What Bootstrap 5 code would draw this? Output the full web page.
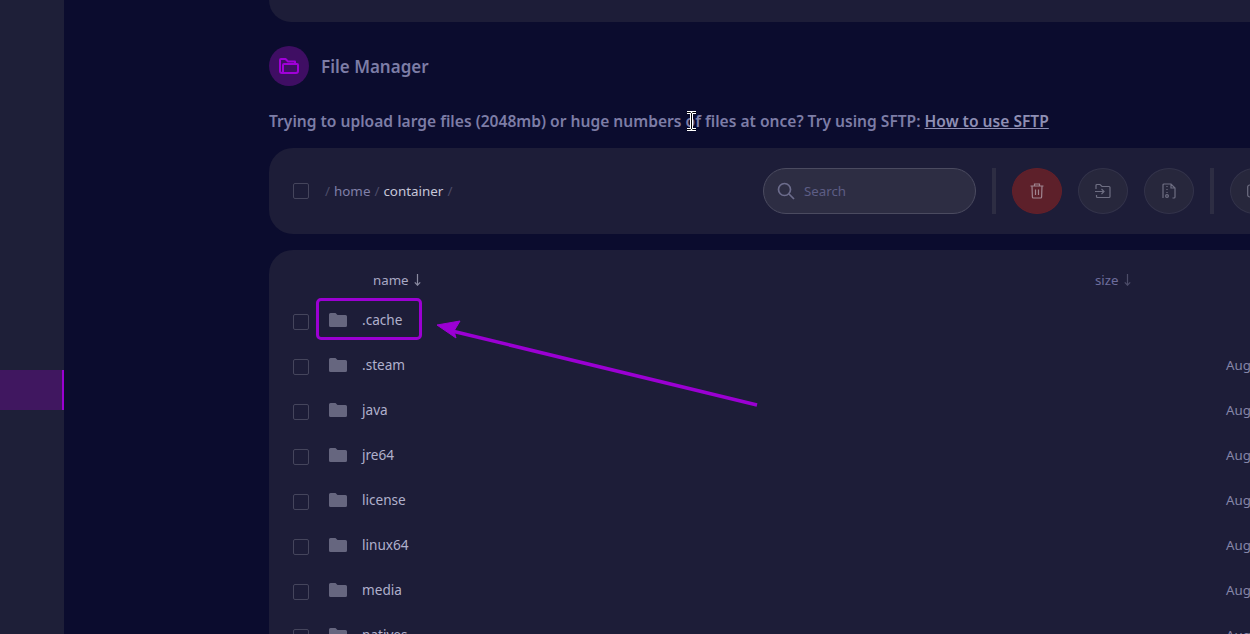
<!DOCTYPE html>
<html lang="en">
<head>
    <meta charset="UTF-8">
    <title>File Manager</title>
    <link href="https://cdn.jsdelivr.net/npm/bootstrap@5.3.0/dist/css/bootstrap.min.css" rel="stylesheet">
    <style>
        html, body {
            height: 100%;
            overflow: hidden;
        }

        body {
            background: #0b0c2e;
            font-family: "Noto Sans", "Open Sans", sans-serif;
            font-size: 13.3px;
            color: #b9b9cf;
        }

        .app-shell {
            width: 1250px;
            height: 634px;
            overflow: hidden;
            position: relative;
        }

        .side-rail {
            width: 64px;
            flex: 0 0 64px;
            background: #1e1f38;
            padding-top: 370px;
        }

        .side-active {
            height: 40px;
            background: #401760;
            border-right: 2px solid #9b00d3;
        }

        .page-body {
            flex: 0 0 1400px;
            padding-left: 205px;
        }

        .top-card {
            height: 22px;
            background: #1d1d38;
            border-radius: 0 0 24px 24px;
        }

        .title-row {
            margin-top: 24px;
            height: 40px;
        }

        .title-badge {
            width: 40px;
            height: 40px;
            background: #3f0e63;
        }

        .title-text {
            font-size: 17px;
            font-weight: 600;
            color: #7d7da6;
            margin: 2px 0 0 12px;
        }

        .upload-note {
            margin: 24px 0 15px;
            height: 23px;
            line-height: 23px;
            font-size: 15.58px;
            font-weight: 600;
            color: #7d7da6;
            white-space: nowrap;
        }

        .upload-note a {
            color: #8f8fb4;
        }

        .tool-card {
            height: 86px;
            background: #1d1d38;
            border-radius: 24px;
            padding: 0 24px;
        }

        .tick-box {
            width: 16px;
            height: 16px;
            border: 1px solid #45455c;
            border-radius: 2px;
            flex: none;
        }

        .crumbs {
            margin-left: 16px;
            font-size: 13.4px;
            color: #8080a8;
            gap: 4px;
        }

        .crumb-sep {
            color: #4c4c68;
        }

        .crumb-now {
            color: #c7c7d8;
        }

        .tool-right {
            position: absolute;
            left: 763px;
            gap: 16px;
        }

        .search-pill {
            width: 213px;
            height: 46px;
            background: #2d2d43;
            border: 1px solid #4b4b60;
            border-radius: 23px;
            padding-left: 13px;
            gap: 9px;
            color: #5d5d85;
        }

        .search-label {
            margin-top: 2px;
        }

        .tool-divider {
            width: 4px;
            height: 46px;
            background: #2d2d43;
        }

        .round-tool {
            width: 50px;
            height: 46px;
            border-radius: 50%;
            background: #27273c;
            border: 1px solid #33334a;
            color: #6e6e82;
        }

        .round-danger {
            background: #5d202a;
            border-color: #64202a;
            color: #a08590;
        }

        .list-card {
            margin-top: 16px;
            height: 500px;
            background: #1d1d38;
            border-radius: 24px 24px 0 0;
            position: relative;
            padding-left: 24px;
        }

        .list-head {
            height: 48px;
            position: relative;
        }

        .head-name {
            position: absolute;
            left: 80px;
            top: 21px;
            color: #a9a9c4;
        }

        .head-size {
            position: absolute;
            left: 802px;
            top: 21px;
            color: #6d6d9c;
        }

        .head-arrow {
            margin-left: 5px;
            vertical-align: -1px;
        }

        .file-row {
            height: 45px;
        }

        .file-row .tick-box {
            margin-top: 2px;
        }

        .file-icon {
            margin-left: 20px;
            margin-top: -2px;
            flex: none;
        }

        .file-name {
            margin-left: 15px;
            color: #b0b0cc;
            font-size: 13.6px;
        }

        .file-date {
            position: absolute;
            left: 957px;
            color: #8585a8;
        }

        .mark-box {
            position: absolute;
            left: 316px;
            top: 298px;
            width: 106px;
            height: 42px;
            border: 3px solid #9b00d3;
            border-radius: 5px;
        }

        .arrow-layer {
            position: absolute;
            left: 0;
            top: 0;
        }

        .text-cursor {
            position: absolute;
            left: 686px;
            top: 111px;
        }
    </style>
</head>
<body>
    <div class="app-shell d-flex">
        <div class="side-rail">
            <div class="side-active"></div>
        </div>

        <div class="page-body">
            <div class="top-card"></div>

            <div class="title-row d-flex align-items-center">
                <div class="title-badge rounded-circle d-flex align-items-center justify-content-center">
                    <svg width="22" height="22" viewBox="0 0 22 22" fill="none" stroke="#a000d8" stroke-width="2" stroke-linejoin="round">
                        <path d="M2 16V5a1 1 0 0 1 1-1h4.500L10 6.500h7V9"/>
                        <path d="M5 18V10a1 1 0 0 1 1-1h13a1 1 0 0 1 1 1v6a2 2 0 0 1-2 2H4a2 2 0 0 1-2-2"/>
                    </svg>
                </div>
                <h1 class="title-text">File Manager</h1>
            </div>

            <p class="upload-note">Trying to upload large files (2048mb) or huge numbers of files at once? Try using SFTP: <a href="#">How to use SFTP</a></p>

            <div class="tool-card d-flex align-items-center">
                <span class="tick-box"></span>
                <div class="crumbs d-flex">
                    <span class="crumb-sep">/</span><span>home</span><span class="crumb-sep">/</span><span class="crumb-now">container</span><span class="crumb-sep">/</span>
                </div>
                <div class="tool-right d-flex align-items-center">
                    <div class="search-pill d-flex align-items-center">
                        <svg width="18" height="18" viewBox="0 0 18 18" fill="none" stroke="#6c6c8c" stroke-width="1.700"><circle cx="7.500" cy="7.500" r="6"/><path d="M12 12l5 5"/></svg>
                        <span class="search-label">Search</span>
                    </div>
                    <span class="tool-divider"></span>
                    <button class="round-tool round-danger d-flex align-items-center justify-content-center p-0" type="button" aria-label="Delete">
                        <svg width="16" height="16" viewBox="0 0 16 16" fill="none" stroke="currentColor" stroke-width="1.200"><path d="M1.500 3h13M5.500 3V1h5v2M3 3l.4 11a1 1 0 0 0 1 1h7.200a1 1 0 0 0 1-1L13 3M6.500 6.500V12M9.500 6.500V12"/></svg>
                    </button>
                    <button class="round-tool d-flex align-items-center justify-content-center p-0" type="button" aria-label="Move">
                        <svg width="16" height="16" viewBox="0 0 16 16" fill="none" stroke="currentColor" stroke-width="1.200"><path d="M1 6V2.500a1 1 0 0 1 1-1h3l2 2h7a1 1 0 0 1 1 1v9a1 1 0 0 1-1 1H2.500a1 1 0 0 1-1-1V12M0 8.500h9M6.500 6L9 8.500 6.500 11"/></svg>
                    </button>
                    <button class="round-tool d-flex align-items-center justify-content-center p-0" type="button" aria-label="Archive">
                        <svg width="16" height="16" viewBox="0 0 16 16" fill="none" stroke="currentColor" stroke-width="1.200"><path d="M11.500 15h1.500a1 1 0 0 0 1-1V5l-4-4H3a1 1 0 0 0-1 1v13M10 1v4h4M6 3v1M6 6v1M6 9v1"/><circle cx="6" cy="13" r="1.400"/></svg>
                    </button>
                    <span class="tool-divider"></span>
                    <button class="round-tool d-flex align-items-center justify-content-center p-0" type="button" aria-label="New">
                        <svg width="16" height="16" viewBox="0 0 16 16" fill="none" stroke="currentColor" stroke-width="1.200"><rect x="0.700" y="2" width="13" height="12" rx="2"/></svg>
                    </button>
                </div>
            </div>

            <div class="list-card">
                <div class="list-head">
                    <span class="head-name">name<svg class="head-arrow" width="7" height="12" viewBox="0 0 7 12" fill="none" stroke="#8a8aa0" stroke-width="1.200"><path d="M3.500 0v11M.8 8.300l2.700 2.900 2.700-2.900"/></svg></span>
                    <span class="head-size">size<svg class="head-arrow" width="7" height="12" viewBox="0 0 7 12" fill="none" stroke="#4c4c68" stroke-width="1.200"><path d="M3.500 0v11M.8 8.300l2.700 2.900 2.700-2.900"/></svg></span>
                </div>
                <div id="fileRows"></div>
            </div>
        </div>

        <div class="mark-box"></div>

        <svg class="arrow-layer" width="1250" height="634" viewBox="0 0 1250 634" fill="none">
            <path d="M757 405L452 331" stroke="#9b00d3" stroke-width="3.500"/>
            <path d="M437 325L460 321L454 331L456 338Z" fill="#9b00d3" stroke="#9b00d3" stroke-width="1"/>
        </svg>

        <svg class="text-cursor" width="11" height="20" viewBox="0 0 11 20" fill="none">
            <path d="M1 1.500h9M1 18.500h9M5.500 1.500v17" stroke="#fff" stroke-width="3"/>
            <path d="M1 1.500h3.500l1 1 1-1H10M1 18.500h3.500l1-1 1 1H10M5.500 2.500v15" stroke="#000" stroke-width="1"/>
        </svg>
    </div>

    <script>
        // file rows, first one has no date in the shot
        const files = ['.cache', '.steam', 'java', 'jre64', 'license', 'linux64', 'media', 'natives'];
        const rows = files.map((name, i) => `
            <div class="file-row d-flex align-items-center">
                <span class="tick-box"></span>
                <svg class="file-icon" width="18" height="14" viewBox="0 0 18 14"><path fill="#66667f" d="M1.500 0H6.500l2 2H16.500A1.500 1.500 0 0 1 18 3.500v9A1.500 1.500 0 0 1 16.500 14h-15A1.500 1.500 0 0 1 0 12.500v-11A1.500 1.500 0 0 1 1.500 0z"/></svg>
                <span class="file-name">${name}</span>
                ${i > 0 ? '<span class="file-date">Aug</span>' : ''}
            </div>`);
        document.getElementById('fileRows').innerHTML = rows.join('');
    </script>
    <script src="https://cdn.jsdelivr.net/npm/bootstrap@5.3.0/dist/js/bootstrap.bundle.min.js"></script>
</body>
</html>
